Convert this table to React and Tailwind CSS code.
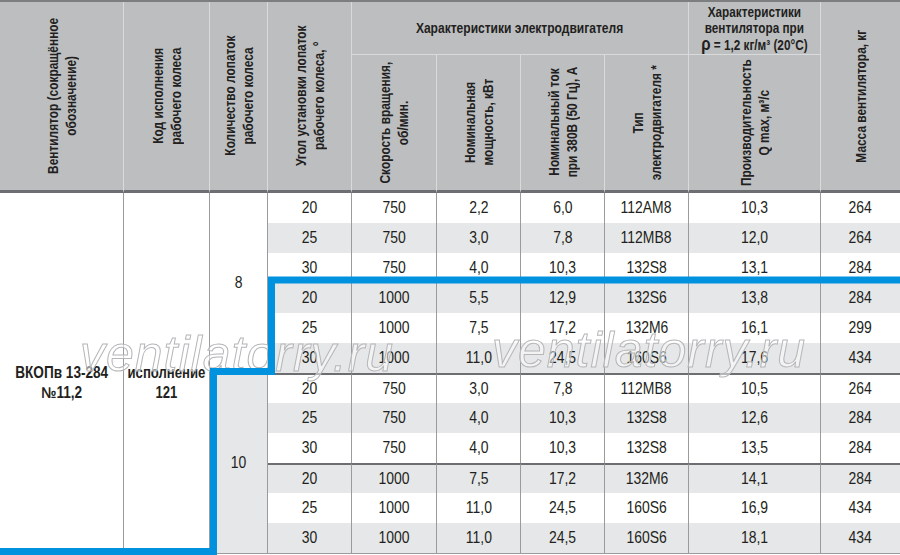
const rows = [
  ['20', '750', '2,2', '6,0', '112AM8', '10,3', '264'],
  ['25', '750', '3,0', '7,8', '112MB8', '12,0', '264'],
  ['30', '750', '4,0', '10,3', '132S8', '13,1', '284'],
  ['20', '1000', '5,5', '12,9', '132S6', '13,8', '284'],
  ['25', '1000', '7,5', '17,2', '132M6', '16,1', '299'],
  ['30', '1000', '11,0', '24,5', '160S6', '17,6', '434'],
  ['20', '750', '3,0', '7,8', '112MB8', '10,5', '264'],
  ['25', '750', '4,0', '10,3', '132S8', '12,6', '284'],
  ['30', '750', '4,0', '10,3', '132S8', '13,5', '284'],
  ['20', '1000', '7,5', '17,2', '132M6', '14,1', '284'],
  ['25', '1000', '11,0', '24,5', '160S6', '16,9', '434'],
  ['30', '1000', '11,0', '24,5', '160S6', '18,1', '434'],
];

// narrow look: Liberation Sans squeezed along the text direction
function Narrow({ children, className = 'scale-x-[0.82]' }) {
  return <span className={`inline-block whitespace-nowrap ${className}`}>{children}</span>;
}

function HeadCell({ lines, className = '', tall = true }) {
  return (
    <div
      className={`flex items-center justify-center bg-[#bcbec0] border-r border-[#d9dadc] ${
        tall ? 'border-b-[3px] border-b-[#6d6e71]' : ''
      } ${className}`}
    >
      <span className="[writing-mode:vertical-rl] rotate-180 scale-y-[0.85] whitespace-nowrap text-center text-[14px] leading-[18px] font-bold text-[#231f20]">
        {lines.map((l, i) => (
          <span key={i}>
            {l}
            {i < lines.length - 1 && <br />}
          </span>
        ))}
      </span>
    </div>
  );
}

function Watermark({ className }) {
  return (
    <span
      className={`absolute italic text-[50px] leading-none tracking-[1px] text-white/50 [-webkit-text-stroke:1px_#b5b6b8] pointer-events-none ${className}`}
    >
      ventilatorry.ru
    </span>
  );
}

export default function App() {
  return (
    <div className="relative w-[900px] h-[555px] bg-white overflow-hidden font-['Liberation_Sans',Arial,sans-serif]">
      <div className="grid grid-cols-[124px_86px_58px_84px_85px_84px_84px_84px_132px_79px] grid-rows-[53px_138px_repeat(12,30px)] border-t-2 border-t-[#7d7e80] border-b border-b-[#9a9b9d]">
        <HeadCell className="row-span-2" lines={['Вентилятор (сокращённое', 'обозначение)']} />
        <HeadCell className="row-span-2" lines={['Код исполнения', 'рабочего колеса']} />
        <HeadCell className="row-span-2" lines={['Количество лопаток', 'рабочего колеса']} />
        <HeadCell className="row-span-2" lines={['Угол установки лопаток', 'рабочего колеса, °']} />
        <div className="col-span-4 flex items-center justify-center bg-[#bcbec0] border-r border-b border-[#d9dadc] text-[14px] font-bold text-[#231f20]">
          <Narrow className="scale-x-[0.86]">Характеристики электродвигателя</Narrow>
        </div>
        <div className="flex items-center justify-center bg-[#bcbec0] border-r border-b border-[#d9dadc] text-center text-[14px] leading-[16px] font-bold text-[#231f20]">
          <Narrow className="scale-x-[0.84]">
            Характеристики
            <br />
            вентилятора при
            <br />
            <span className="text-[18px]">ρ</span> = 1,2 кг/м³ (20°С)
          </Narrow>
        </div>
        <HeadCell className="row-span-2 border-r-0" lines={['Масса вентилятора, кг']} />
        <HeadCell lines={['Скорость вращения,', 'об/мин.']} />
        <HeadCell lines={['Номинальная', 'мощность, кВт']} />
        <HeadCell lines={['Номинальный ток', 'при 380В (50 Гц), А']} />
        <HeadCell lines={['Тип', 'электродвигателя *']} />
        <HeadCell lines={['Производительность', 'Q max, м³/с']} />

        {rows.map((r, i) => (
          <div key={i} className="contents">
            {i === 0 && (
              <>
                <div className="row-span-12 flex items-center justify-center pt-5 border-r border-[#9a9b9d] text-center text-[16px] leading-[20px] font-bold text-[#231f20]">
                  <Narrow className="scale-x-[0.85]">
                    ВКОПв 13-284
                    <br />
                    №11,2
                  </Narrow>
                </div>
                <div className="row-span-12 flex items-center justify-center pt-5 border-r border-[#9a9b9d] text-center text-[16px] leading-[20px] font-bold text-[#231f20]">
                  <Narrow>
                    исполнение
                    <br />
                    121
                  </Narrow>
                </div>
                <div className="row-span-6 flex items-center justify-center border-r border-[#9a9b9d] text-[17px] text-[#231f20]">
                  <Narrow>8</Narrow>
                </div>
              </>
            )}
            {i === 6 && (
              <div className="row-span-6 flex items-center justify-center bg-[#e6e7e8] border-r border-[#9a9b9d] text-[17px] text-[#231f20]">
                <Narrow>10</Narrow>
              </div>
            )}
            {r.map((v, j) => (
              <div
                key={j}
                className={`flex items-center justify-center text-[17px] text-[#231f20] ${
                  i % 2 === 1 ? 'bg-[#e6e7e8]' : 'bg-white'
                } ${j < 6 ? 'border-r border-r-[#9a9b9d]' : ''} ${
                  i === 6 || i === 9 ? 'border-t-2 border-t-[#6d6e71]' : ''
                }`}
              >
                <Narrow>{v}</Narrow>
              </div>
            ))}
          </div>
        ))}
      </div>

      <Watermark className="left-[80px] top-[329px]" />
      <Watermark className="left-[492px] top-[325px]" />

      <svg className="absolute inset-0 pointer-events-none" width="900" height="555" viewBox="0 0 900 555">
        <polyline
          points="900,280 271.5,280 271.5,371.5 213.5,371.5 213.5,551.5 0,551.5"
          fill="none"
          stroke="#0091df"
          strokeWidth="7"
          strokeLinejoin="miter"
        />
      </svg>
    </div>
  );
}
